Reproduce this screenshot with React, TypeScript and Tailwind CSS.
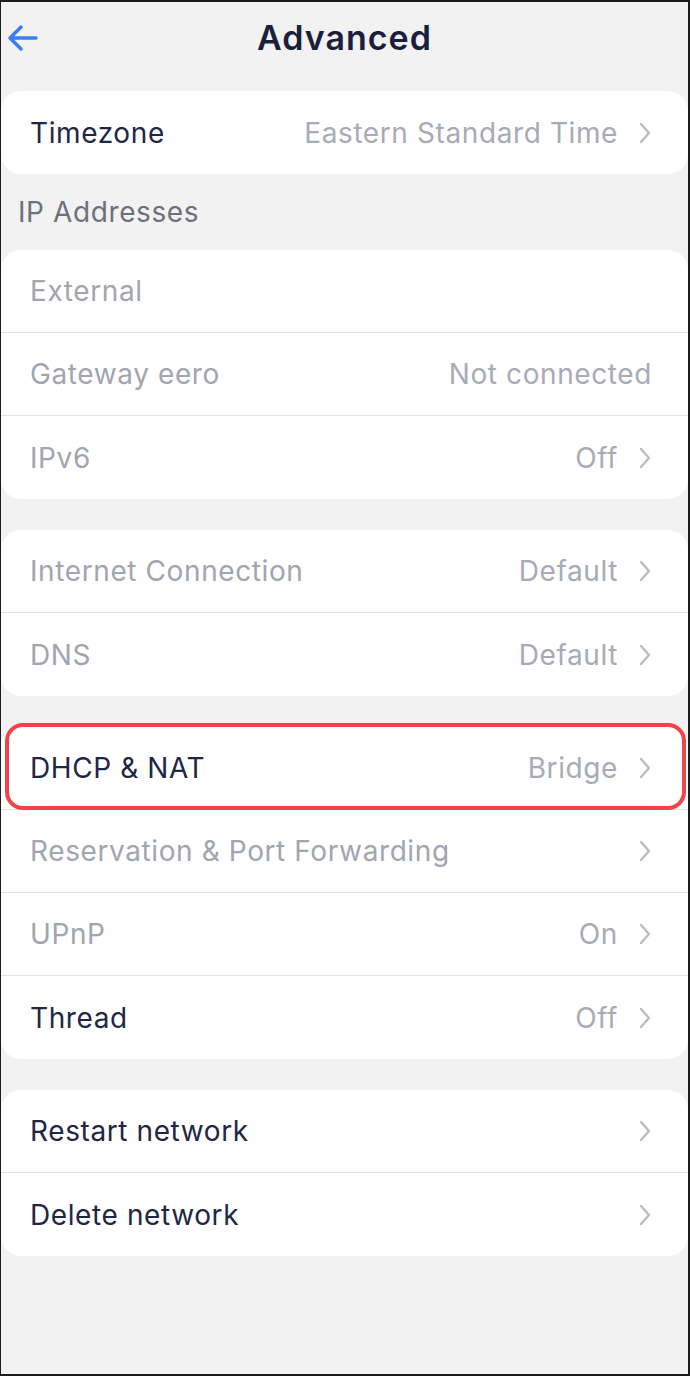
import { Fragment } from "react";

type Row = {
  label: string;
  value?: string;
  chevron?: boolean;
  muted?: boolean;
  highlight?: boolean;
};

const groups: { title?: string; rows: Row[] }[] = [
  { rows: [{ label: "Timezone", value: "Eastern Standard Time", chevron: true }] },
  {
    title: "IP Addresses",
    rows: [
      { label: "External", muted: true },
      { label: "Gateway eero", value: "Not connected", muted: true },
      { label: "IPv6", value: "Off", chevron: true, muted: true },
    ],
  },
  {
    rows: [
      { label: "Internet Connection", value: "Default", chevron: true, muted: true },
      { label: "DNS", value: "Default", chevron: true, muted: true },
    ],
  },
  {
    rows: [
      { label: "DHCP & NAT", value: "Bridge", chevron: true, highlight: true },
      { label: "Reservation & Port Forwarding", chevron: true, muted: true },
      { label: "UPnP", value: "On", chevron: true, muted: true },
      { label: "Thread", value: "Off", chevron: true },
    ],
  },
  {
    rows: [
      { label: "Restart network", chevron: true },
      { label: "Delete network", chevron: true },
    ],
  },
];

const Chevron = () => (
  <svg width="14" height="24" viewBox="0 0 14 24" fill="none" className="shrink-0">
    <path d="M3 3l8 9-8 9" stroke="#b9bcc4" strokeWidth="2.4" strokeLinecap="round" strokeLinejoin="round" />
  </svg>
);

const SettingRow = ({ row }: { row: Row }) => (
  <div className="relative flex h-[83px] items-center justify-between pl-[29px] pr-[36px]">
    <span className={row.muted ? "text-[#a2a5af]" : "text-[#222645]"}>{row.label}</span>
    <div className="flex items-center gap-[20px]">
      {row.value && <span className="text-[#a8abb5]">{row.value}</span>}
      {row.chevron && <Chevron />}
    </div>
    {/* red annotation box */}
    {row.highlight && (
      <div className="pointer-events-none absolute -top-[4px] left-[4px] right-[2px] -bottom-[1px] rounded-[18px] border-[4px] border-[#f2434b]" />
    )}
  </div>
);

export default function App() {
  return (
    <div
      className="h-[1376px] w-[690px] overflow-hidden border-t-2 border-b-2 border-l border-r-2 border-[#1c1c1c] bg-[#f2f2f2] text-[28px] tracking-[0.6px]"
      style={{ fontFamily: "Inter, 'Noto Sans', sans-serif" }}
    >
      {/* header */}
      <div className="relative flex h-[89px] items-start justify-center pt-[10px]">
        <svg width="32" height="28" viewBox="0 0 32 28" fill="none" className="absolute left-[6px] top-[22px]">
          <path d="M29 14H4M14 3L3 14l11 11" stroke="#3a7cf2" strokeWidth="3.4" strokeLinecap="round" strokeLinejoin="round" />
        </svg>
        <h1 className="text-[34px] font-semibold tracking-[1px] text-[#1b1f3b]">Advanced</h1>
      </div>

      <div className="flex flex-col">
        {groups.map((g, i) => (
          <Fragment key={i}>
            {g.title ? (
              <div className="flex h-[76px] items-center pl-[17px] text-[#6d707b]">{g.title}</div>
            ) : (
              i > 0 && <div className="h-[31px]" />
            )}
            <div className="flex flex-col divide-y divide-[#e2e2e5] rounded-[20px] bg-white">
              {g.rows.map((r) => (
                <SettingRow key={r.label} row={r} />
              ))}
            </div>
          </Fragment>
        ))}
      </div>
    </div>
  );
}
